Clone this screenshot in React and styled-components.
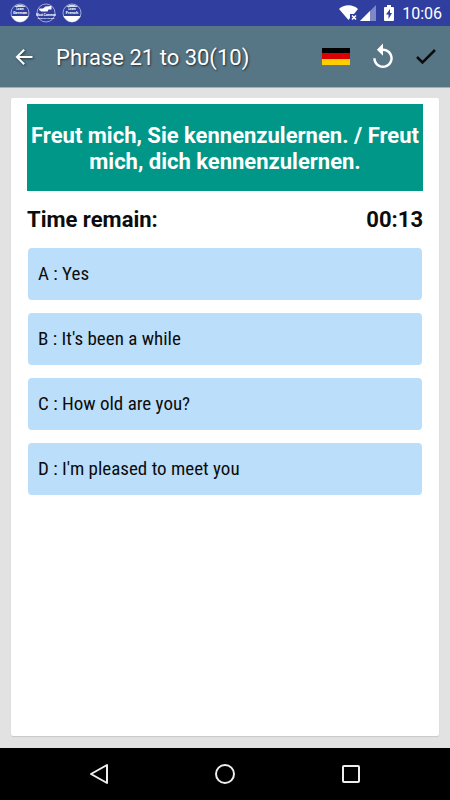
import React from "react";
import styled, { createGlobalStyle } from "styled-components";

const GlobalStyle = createGlobalStyle`
  *, *::before, *::after { box-sizing: border-box; }
  body { margin: 0; font-family: Roboto, "Liberation Sans", sans-serif; color: #0c0c0c; }
  svg { display: block; flex: none; }
`;

const Screen = styled.div`
  display: flex;
  flex-direction: column;
  min-height: 100vh;
  background: #e2e2e2;
`;

const StatusBar = styled.div`
  display: flex;
  align-items: center;
  justify-content: space-between;
  height: 26px;
  padding: 0 8px 0 10px;
  background: #303f9f;
  color: #fff;
`;

const StatusGroup = styled.div`
  display: flex;
  align-items: center;
  gap: ${(p) => p.$gap}px;
`;

const Clock = styled.time`
  font-size: 16px;
  line-height: 24px;
  padding-top: 2px;
`;

const AppBar = styled.header`
  display: flex;
  align-items: center;
  height: 62px;
  padding: 0 14px 0 12px;
  background: #567585;
  border-bottom: 1px solid #a3b1b9;
  color: #fff;
`;

const Title = styled.h1`
  flex: 1;
  margin: 0 0 0 20px;
  padding-top: 2px;
  font-size: 22px;
  line-height: 28px;
  font-weight: 400;
  text-shadow: 1px 1px 2px rgba(0, 0, 0, 0.6);
`;

const Actions = styled.div`
  display: flex;
  align-items: center;
  gap: 22px;
`;

const IconButton = styled.button`
  display: flex;
  padding: 0;
  border: 0;
  background: none;
  color: ${(p) => p.$color || "#fff"};
  cursor: pointer;
`;

const BackButton = styled(IconButton)`
  filter: drop-shadow(1px 1px 1px rgba(0, 0, 0, 0.5));
`;

const Card = styled.main`
  flex: 1;
  margin: 10px 11px 12px;
  padding: 6px 16px;
  border-radius: 2px;
  background: #fff;
  box-shadow: 0 1px 1px rgba(0, 0, 0, 0.12);
`;

const Question = styled.h2`
  margin: 0;
  padding: 19px 0 16px;
  background: #009788;
  color: #fff;
  font-size: 22px;
  line-height: 26px;
  font-weight: 700;
  text-align: center;
`;

const TimeRow = styled.div`
  display: flex;
  justify-content: space-between;
  padding: 16px 0 15px;
  font-size: 22px;
  line-height: 26px;
  font-weight: 700;
`;

const Answers = styled.div`
  display: flex;
  flex-direction: column;
  gap: 13px;
  padding: 0 1px;
`;

const Answer = styled.button`
  height: 52px;
  padding: 0 10px;
  border: 0;
  border-radius: 4px;
  background: #bbdefb;
  color: #0c0c0c;
  font-family: "Roboto Condensed", Roboto, "Liberation Sans", sans-serif;
  font-size: 19px;
  line-height: 24px;
  text-align: left;
  cursor: pointer;
`;

const NavBar = styled.nav`
  display: flex;
  align-items: center;
  justify-content: space-evenly;
  height: 52px;
  background: #000;
`;

const NavButton = styled(IconButton)`
  justify-content: center;
  width: 54px;
  padding: 12px 0;
`;

function AppBadge({ top, bottom, map }) {
  return (
    <svg width="20" height="20" viewBox="0 0 40 40" aria-hidden="true">
      <circle cx="20" cy="20" r="18" fill="none" stroke="#c3c9ec" strokeWidth="1.5" />
      {map ? (
        <path d="M7 11 L14 11 L19 7 L31 6 L31 13 L25 13 L23 17 L11 17 L6 14Z" fill="#fff" />
      ) : (
        <>
          <path d="M8 8 Q20 -1 32 8Z" fill="#d6daf2" />
          <path d="M3 26 H37 Q32 37 20 38 Q8 37 3 26Z" fill="#fff" />
        </>
      )}
      <text x="20" y={map ? 25 : 13} fill="#fff" fontSize="6" fontWeight="700" textAnchor="middle">{top}</text>
      <text x="20" y={map ? 32 : 22} fill="#fff" fontSize={map ? 5 : 8} fontWeight="700" textAnchor="middle">{bottom}</text>
    </svg>
  );
}

function WifiOff() {
  return (
    <svg width="19" height="16" viewBox="0 0 19 16" aria-hidden="true">
      <path d="M0 4 C5 -1 14 -1 19 4 L15 9 H11 V13 L9.500 15Z" fill="#fff" />
      <path d="M13 10.500 L17 14.500 M17 10.500 L13 14.500" stroke="#fff" strokeWidth="1.500" />
    </svg>
  );
}

function Signal() {
  return (
    <svg width="16" height="16" viewBox="0 0 16 16" aria-hidden="true">
      <path d="M0 16 L16 0 V16Z" fill="#7d88c6" />
      <path d="M0 16 L10 6 V16Z" fill="#fff" />
    </svg>
  );
}

function Battery() {
  return (
    <svg width="10" height="16" viewBox="0 0 10 16" aria-hidden="true">
      <path d="M3 0 H7 V2 H9 Q10 2 10 3 V15 Q10 16 9 16 H1 Q0 16 0 15 V3 Q0 2 1 2 H3Z" fill="#fff" />
      <path d="M6 4 L2 9.500 H4.500 V14 L8 8 H6Z" fill="#303f9f" />
    </svg>
  );
}

const ANSWERS = [
  "A : Yes",
  "B : It's been a while",
  "C : How old are you?",
  "D : I'm pleased to meet you",
];

export default function App() {
  return (
    <>
      <GlobalStyle />
      <Screen>
        <StatusBar>
          <StatusGroup $gap={6}>
            <AppBadge top="Learn" bottom="German" />
            <AppBadge top="Most Common" bottom="English Phrase" map />
            <AppBadge top="Learn" bottom="French" />
          </StatusGroup>
          <StatusGroup $gap={8}>
            <StatusGroup $gap={2}>
              <WifiOff />
              <Signal />
            </StatusGroup>
            <Battery />
            <Clock>10:06</Clock>
          </StatusGroup>
        </StatusBar>
        <AppBar>
          <BackButton aria-label="Back">
            <svg width="24" height="24" viewBox="0 0 24 24">
              <path d="M20.500 11H7.330l5.590-5.590L11.500 4l-8 8 8 8 1.410-1.410L7.330 13H20.500v-2z" fill="currentColor" />
            </svg>
          </BackButton>
          <Title>Phrase 21 to 30(10)</Title>
          <Actions>
            <IconButton aria-label="German">
              <svg width="28" height="17" viewBox="0 0 28 17">
                <rect width="28" height="6" fill="#000" />
                <rect y="5" width="28" height="6" fill="#d00" />
                <rect y="11" width="28" height="6" fill="#ffce00" />
              </svg>
            </IconButton>
            <IconButton aria-label="Restart">
              <svg width="22" height="30" viewBox="3 0 18 24">
                <path d="M12 5V1L7 6l5 5V7c3.310 0 6 2.690 6 6s-2.690 6-6 6-6-2.690-6-6H4c0 4.420 3.580 8 8 8s8-3.580 8-8-3.580-8-8-8z" fill="currentColor" />
              </svg>
            </IconButton>
            <IconButton aria-label="Submit" $color="#0c0c0c">
              <svg width="20" height="24" viewBox="2 0 20 24">
                <path d="M3 12 L8.500 17.500 L21 5" fill="none" stroke="currentColor" strokeWidth="2.500" />
              </svg>
            </IconButton>
          </Actions>
        </AppBar>
        <Card>
          <Question>Freut mich, Sie kennenzulernen. / Freut mich, dich kennenzulernen.</Question>
          <TimeRow>
            <span>Time remain:</span>
            <time>00:13</time>
          </TimeRow>
          <Answers>
            {ANSWERS.map((answer) => (
              <Answer key={answer}>{answer}</Answer>
            ))}
          </Answers>
        </Card>
        <NavBar>
          <NavButton aria-label="Navigate back">
            <svg width="20" height="22" viewBox="0 0 20 22">
              <path d="M18 2 V20 L2 11Z" fill="none" stroke="#eee" strokeWidth="2" strokeLinejoin="round" />
            </svg>
          </NavButton>
          <NavButton aria-label="Home">
            <svg width="22" height="22" viewBox="0 0 22 22">
              <circle cx="11" cy="11" r="9" fill="none" stroke="#eee" strokeWidth="2" />
            </svg>
          </NavButton>
          <NavButton aria-label="Recent apps">
            <svg width="20" height="20" viewBox="0 0 20 20">
              <rect x="2" y="2" width="16" height="16" rx="1" fill="none" stroke="#eee" strokeWidth="2" />
            </svg>
          </NavButton>
        </NavBar>
      </Screen>
    </>
  );
}
